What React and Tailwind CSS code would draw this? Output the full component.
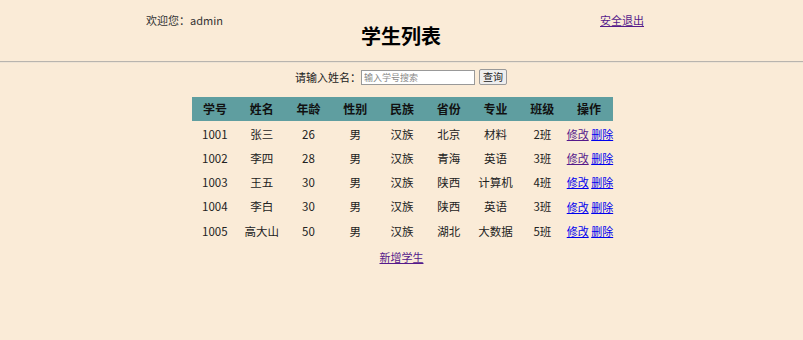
// App.jsx
// Student list page

const students = [
  { id: '1001', name: '张三', age: 26, sex: '男', nation: '汉族', province: '北京', major: '材料', cls: '2班', visited: true },
  { id: '1002', name: '李四', age: 28, sex: '男', nation: '汉族', province: '青海', major: '英语', cls: '3班', visited: true },
  { id: '1003', name: '王五', age: 30, sex: '男', nation: '汉族', province: '陕西', major: '计算机', cls: '4班', visited: false },
  { id: '1004', name: '李白', age: 30, sex: '男', nation: '汉族', province: '陕西', major: '英语', cls: '3班', visited: false },
  { id: '1005', name: '高大山', age: 50, sex: '男', nation: '汉族', province: '湖北', major: '大数据', cls: '5班', visited: false },
]

const headers = ['学号', '姓名', '年龄', '性别', '民族', '省份', '专业', '班级', '操作']

const App = () => {
  return (
    <div
      className="w-[803px] h-[340px] bg-[#faebd7] text-[#222] text-[11px] overflow-hidden"
      style={{ fontFamily: '"Microsoft YaHei", "Noto Sans CJK SC", sans-serif' }}
    >
      {/* Header */}
      <div className="flex h-[61px]">
        <div className="w-[146px]" />
        <div className="w-[215px] pt-[12px] text-[#333]">欢迎您：admin</div>
        <div className="w-[239px] pt-[21px]">
          <h1 className="text-[20px] font-bold text-black leading-[30px]">学生列表</h1>
        </div>
        <div className="pt-[12px]">
          <a href="#" className="text-[#551a8b] underline">安全退出</a>
        </div>
      </div>
      <div className="border-t border-[#b8b4ae] border-b border-b-[#eee3d4]" />

      {/* Search */}
      <div className="flex items-center justify-center mt-[5px] h-[18px] pr-[1px]">
        <span className="text-[#222]">请输入姓名：</span>
        <input
          placeholder="输入学号搜索"
          className="w-[114px] h-[15px] bg-white border border-[#999] px-[2px] text-[9px] placeholder:text-[#888] outline-none"
        />
        <button className="ml-[4px] h-[16px] px-[3px] bg-[#eee] border border-[#999] rounded-[2px] text-[10px] leading-none">
          查询
        </button>
      </div>

      {/* Table */}
      <div className="flex justify-center mt-[11px] pl-[1px]">
        <div className="w-[421px]">
          <div className="grid grid-cols-9 h-[24px] items-center bg-[#5f9ea0] font-bold text-[#111] text-[12px]">
            {headers.map((h) => (
              <div key={h} className="text-center">{h}</div>
            ))}
          </div>
          <div className="pt-[1px] text-[11.5px]">
            {students.map((s) => (
              <div key={s.id} className="grid grid-cols-9 h-[24.3px] items-center text-center">
                <div>{s.id}</div>
                <div>{s.name}</div>
                <div>{s.age}</div>
                <div>{s.sex}</div>
                <div>{s.nation}</div>
                <div>{s.province}</div>
                <div>{s.major}</div>
                <div>{s.cls}</div>
                <div className="whitespace-nowrap pl-[1px] text-[11px]">
                  <a href="#" className={`underline ${s.visited ? 'text-[#551a8b]' : 'text-[#0000ee]'}`}>修改</a>{' '}
                  <a href="#" className="underline text-[#0000ee]">删除</a>
                </div>
              </div>
            ))}
          </div>
        </div>
      </div>

      {/* Add */}
      <div className="flex justify-center mt-[6px]">
        <a href="#" className="text-[#551a8b] underline">新增学生</a>
      </div>
    </div>
  )
}

export default App
